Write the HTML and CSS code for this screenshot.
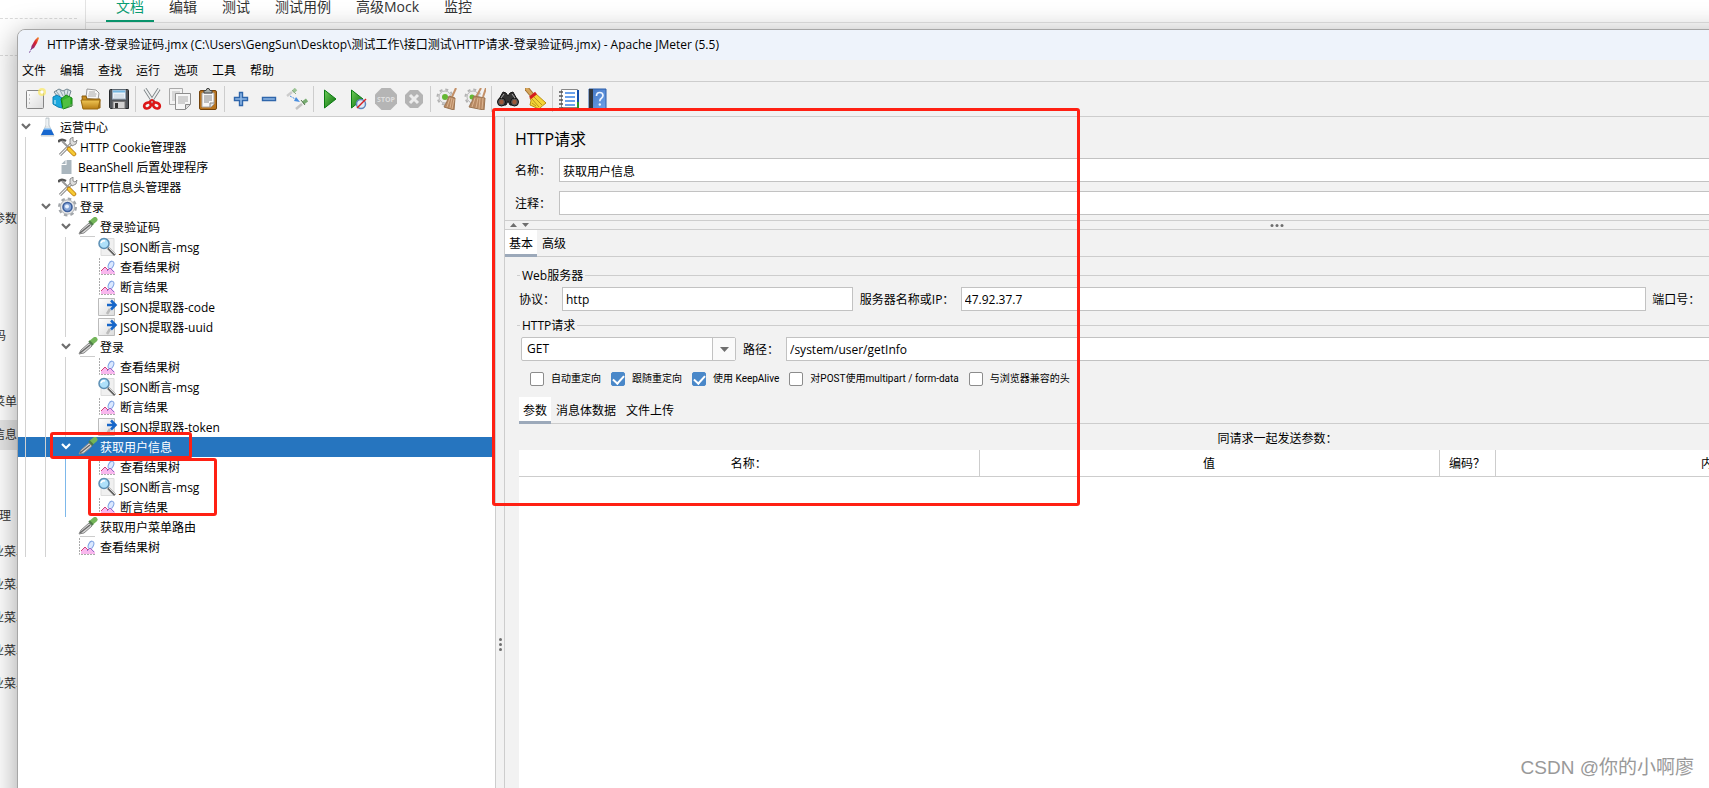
FILE: index.html
```html
<!DOCTYPE html>
<html lang="zh-CN">
<head>
<meta charset="utf-8">
<title>Apache JMeter (5.5)</title>
<link rel="stylesheet" href="styles.css">
</head>
<body>
<svg class="sprite" aria-hidden="true">
  <defs>
    <linearGradient id="g-paper" x1="0" y1="0" x2="1" y2="1"><stop offset="0" stop-color="#fff"/><stop offset="1" stop-color="#dcdcdc"/></linearGradient>
    <linearGradient id="g-green" x1="0" y1="0" x2="1" y2="1"><stop offset="0" stop-color="#6fce5a"/><stop offset="1" stop-color="#066b08"/></linearGradient>
    <linearGradient id="g-gold" x1="0" y1="0" x2="0" y2="1"><stop offset="0" stop-color="#f0c755"/><stop offset="1" stop-color="#b87d14"/></linearGradient>
    <linearGradient id="g-blue" x1="0" y1="0" x2="1" y2="1"><stop offset="0" stop-color="#3f73c4"/><stop offset="1" stop-color="#6fa3e8"/></linearGradient>
    <linearGradient id="g-feather" x1="1" y1="0" x2="0" y2="1"><stop offset="0" stop-color="#f59a2e"/><stop offset=".45" stop-color="#d9232e"/><stop offset="1" stop-color="#7b2a8c"/></linearGradient>
  </defs>

  <symbol id="i-feather" viewBox="0 0 14 18"><path d="M11 1 8 4 4.500 10 4 13.500 7 12l3-5 2-5z" fill="url(#g-feather)"/><path d="M4.500 12.500 2.500 16.500" stroke="#6b2a86" stroke-dasharray="2 1"/></symbol>

  <symbol id="i-new" viewBox="0 0 22 22"><rect x="2.500" y="2.500" width="17" height="18" rx="1" fill="url(#g-paper)" stroke="#858585"/><path d="M5 7h1M5 11h1M5 15h1" stroke="#999"/><circle cx="18" cy="4" r="4" fill="#fbe96a" opacity=".75"/><circle cx="18" cy="4" r="1.700" fill="#fff"/></symbol>

  <symbol id="i-templates" viewBox="0 0 22 22"><path d="M2 4 7 1l4 2 4-2 4 2-2 6-8 4z" fill="#dce6ea" stroke="#70858f"/><path d="M4 3 8 8M8 2l3 6M12 2l1 5M16 2l-1 5" stroke="#8ba0aa"/><path d="m1 9 4-2 5 3v10l-4-1-5-3z" fill="#1aa7dd" stroke="#0c7eb2"/><path d="M3 12v4" stroke="#d4f2ff"/><path d="m9 11 5-4 6 3v8l-9 3z" fill="#35b32b" stroke="#13820f"/><path d="m11 12 7-3v8l-7 4z" fill="#4fc040"/><path d="m19 16 3 1-8 4z" fill="#999" opacity=".5"/></symbol>

  <symbol id="i-open" viewBox="0 0 22 22"><path d="m6 10 1-9 9 1 3 3-1 7z" fill="#f7f7f7" stroke="#999"/><path d="M9 4h6M8.500 6h8M8 8h8" stroke="#aaa"/><path d="M2 8h4l1 3h13v9H3z" fill="#c78b1c" stroke="#8a5d0c"/><path d="M1 12h19l-2 9H3z" fill="url(#g-gold)" stroke="#9b6a10"/></symbol>

  <symbol id="i-save" viewBox="0 0 22 22"><path d="M1.500 2.500q0-1 1-1h17q1 0 1 1v18h-18l-1-1z" fill="#53575c" stroke="#25282b"/><rect x="4.500" y="2" width="13" height="9" fill="#e9f1f8" stroke="#9ab"/><path d="M5 3.500h12" stroke="#74b8e2" stroke-width="2"/><path d="M6 7h10M6 9h10" stroke="#c4d2dd"/><rect x="5" y="13.500" width="12" height="7" fill="#d2d2d2" stroke="#777"/><rect x="7" y="15" width="3" height="5" fill="#333"/></symbol>

  <symbol id="i-cut" viewBox="0 0 22 22"><path d="m4 1 9 14M18 1 9 15" stroke="#7d8386" stroke-width="3.500"/><path d="m4 1 9 14M18 1 9 15" stroke="#edf0f0" stroke-width="1.800"/><ellipse cx="6.500" cy="17.500" rx="3.500" ry="2.700" transform="rotate(-30 6.500 17.500)" fill="none" stroke="#dc1717" stroke-width="2.700"/><ellipse cx="15.500" cy="17.500" rx="3.500" ry="2.700" transform="rotate(30 15.500 17.500)" fill="none" stroke="#dc1717" stroke-width="2.700"/><path d="m8 14 3-2 3 2" fill="none" stroke="#dc1717" stroke-width="2"/></symbol>

  <symbol id="i-copy" viewBox="0 0 22 22"><path d="M.5.5h13v16H.5z" fill="#f3f3f3" stroke="#aaa"/><path d="M3 4h8M3 6h8M3 8h3M3 10h3M3 12h3" stroke="#bbb"/><path d="M6.500 5.500h15v11l-5 5h-10z" fill="#f7f7f7" stroke="#8d8d8d"/><path d="M9 9h10M9 11h10M9 13h10M9 15h7" stroke="#aaa"/><path d="M16.500 21v-4.500H21" fill="#ddd" stroke="#888"/></symbol>

  <symbol id="i-paste" viewBox="0 0 22 22"><rect x="2.500" y="2.500" width="17" height="19" rx="1.500" fill="#b87420" stroke="#73430c"/><path d="M5 5h12v11l-3 3H5z" fill="#f8f8f8" stroke="#aaa"/><path d="M7 8h8M7 10h8M7 12h8M7 14h5" stroke="#888"/><path d="M13 19v-4h4" fill="#ddd" stroke="#888"/><path d="M7 5V2.500h2L10 .500h2l1 2h2V5z" fill="#aab0ac" stroke="#444"/></symbol>

  <symbol id="i-plus" viewBox="0 0 22 22"><path d="M9.500 4.500h3v5h5v3h-5v5h-3v-5h-5v-3h5z" fill="#8fb8e6" stroke="#2f66ab" stroke-width="1.400"/></symbol>
  <symbol id="i-minus" viewBox="0 0 22 22"><path d="M4.500 9.500h13v3h-13z" fill="#8fb8e6" stroke="#2f66ab" stroke-width="1.400"/></symbol>

  <symbol id="i-toggle" viewBox="0 0 22 22"><path d="m1 8 5-4" stroke="#ccc" stroke-width="2.500"/><path d="m7 4 3-3" stroke="#9cc495" stroke-width="3.500"/><path d="m6 2 4 4" stroke="#8aab85"/><path d="m10 21 6-5" stroke="#c4c4c4" stroke-width="2.500"/><path d="m17 15 4-3" stroke="#77ab70" stroke-width="3.500"/><path d="m15 12 4 5" stroke="#55784f"/><path d="m4 8 7 4" stroke="#478de0" stroke-dasharray="2 1"/><path d="m10 9 4 5-6-1z" fill="#478de0"/></symbol>

  <symbol id="i-start" viewBox="0 0 22 22"><path d="m5.500 2 11.500 9-11.500 9z" fill="url(#g-green)" stroke="#0a7b11"/></symbol>
  <symbol id="i-start-np" viewBox="0 0 22 22"><path d="m4.500 2 11.500 9-11.500 9z" fill="url(#g-green)" stroke="#0a7b11"/><circle cx="14" cy="16" r="4.500" fill="#e1eaf6" stroke="#5f87bc" stroke-width="1.500"/><path d="m10 20 9-9" stroke="#d62323" stroke-width="1.500"/></symbol>
  <symbol id="i-stop" viewBox="0 0 22 22"><path d="M6.500 0h9L22 6.500v9L15.500 22h-9L0 15.500v-9z" fill="#b5b5b5"/><text x="11" y="14" text-anchor="middle" class="stop-word">STOP</text></symbol>
  <symbol id="i-shutdown" viewBox="0 0 22 22"><path d="M7 2h8l5 5v8l-5 5H7l-5-5V7z" fill="#b4b4b4"/><path d="m7 7 8 8M15 7l-8 8" stroke="#ececec" stroke-width="3"/></symbol>

  <symbol id="i-gear-s" viewBox="0 0 22 22"><circle cx="9" cy="9" r="7.500" fill="none" stroke="#b3b3b3" stroke-width="2" stroke-dasharray="3 2.900"/><circle cx="9" cy="9" r="6" fill="#eee" stroke="#b5b5b5"/></symbol>
  <symbol id="i-clear" viewBox="0 0 22 22"><use href="#i-gear-s"/><circle cx="9" cy="9" r="3" fill="#65b733"/><path d="m20 0-4 9" stroke="#c49067" stroke-width="2"/><path d="m13 8 6 2-1 12-10-3q3-5 5-11z" fill="#b78963" stroke="#9c7551"/><path d="m14 10-3 9M16 10l-2 10M18 11l-2 10" stroke="#dbb48f"/></symbol>
  <symbol id="i-clear-all" viewBox="0 0 22 22"><use href="#i-gear-s"/><circle cx="8" cy="9" r="2.500" fill="#65b733"/><path d="m17 0-5 9M22 0l-3 9" stroke="#c49067" stroke-width="2"/><path d="m10 8 11 2-1 12-15-3q3-5 5-11z" fill="#b78963" stroke="#9c7551"/><path d="m11 10-3 9M14 10l-2 10M16 10l-1 11M19 10l-1 11" stroke="#dbb48f"/></symbol>

  <symbol id="i-search" viewBox="0 0 22 22"><path d="m6 4 3 1 2 3 2-3 3-1 5 9-2 4h-6l-2-4-2 4H3l-2-4z" fill="#333" stroke="#151515"/><circle cx="4.500" cy="14" r="4" fill="#555" stroke="#111"/><circle cx="17.500" cy="14" r="4" fill="#555" stroke="#111"/><circle cx="4.500" cy="14" r="2.200" fill="#9d5939"/><circle cx="17.500" cy="14" r="2.200" fill="#9d5939"/><path d="m7 6-3 4M15 6l3 4" stroke="#aaa"/></symbol>
  <symbol id="i-broom" viewBox="0 0 22 22"><path d="m2 1 5 6" stroke="#a47432" stroke-width="5" stroke-linecap="round"/><path d="m2 1 5 6" stroke="#d6a55b" stroke-width="3" stroke-linecap="round"/><path d="m10 5 11 10q-4 3-7 6L5 17q2-5 0-7z" fill="#f4d536" stroke="#b98e14"/><path d="m9 9 8 8M7 11l7 8M7 15l4 3" stroke="#b9941d"/><path d="m5 10 6-5" stroke="#d51d1d" stroke-width="3"/></symbol>
  <symbol id="i-log" viewBox="0 0 22 22"><path d="M3.500 1.500h16v18h-16z" fill="#fff" stroke="#888"/><path d="M19 2h2v19h-2z" fill="#124eac"/><path d="M19 14h2v7h-2z" fill="#27922e"/><path d="M7 5h10M7 9h10M7 13h10M7 17h10" stroke="#3a82e5" stroke-width="1.500"/><path d="M1 4h4M1 8h4M1 12h4M1 16h4M1 20h4" stroke="#555" stroke-width="1.500"/></symbol>
  <symbol id="i-help" viewBox="0 0 22 22"><path d="M3 1h17v20H3z" fill="url(#g-blue)" stroke="#2d5ea8"/><path d="M3 1h4v20H3z" fill="#31363d"/><path d="M10.500 8q0-3.500 3.200-3.500 3.300 0 3.300 3 0 1.500-1.600 2.700-1.600 1-1.600 3" fill="none" stroke="#eaf3ff" stroke-width="1.700"/><circle cx="13.800" cy="16.500" r="1.200" fill="#eaf3ff"/></symbol>

  <symbol id="i-chevron" viewBox="0 0 11 20"><path d="m1 7 4 4 4-4" fill="none" stroke="currentColor" stroke-width="2.200"/></symbol>
  <symbol id="i-flask" viewBox="0 0 20 20"><path d="M8 1h3v7l5 11H3L8 8z" fill="#dfe6ea" stroke="#b7c0c5" stroke-width=".8"/><path d="M6 12h7l3 6H3z" fill="#1767cf"/><path d="M6 12h7" stroke="#8cc3f5" stroke-width="1.500"/><path d="M9 2v7" stroke="#fff"/></symbol>
  <symbol id="i-tools" viewBox="0 0 20 20"><path d="m2 18 12-12" stroke="#777" stroke-width="3"/><path d="m2 18 12-12" stroke="#eee" stroke-width="1.300"/><path d="M12 6V2l3-2v4l2 1 2-2-1 4-4 2z" fill="#ddd" stroke="#777" stroke-width=".8"/><path d="M0 5q3-4 8-1" fill="none" stroke="#555" stroke-width="2.500"/><path d="m4 4 7 7" stroke="#999" stroke-width="2"/><path d="m11 12 5 5" stroke="#b8780a" stroke-width="4.500" stroke-linecap="round"/><path d="m11 12 5 5" stroke="#f6ca35" stroke-width="3" stroke-linecap="round"/></symbol>
  <symbol id="i-doc" viewBox="0 0 17 20"><path d="M8 3h5v14H3V8h5z" fill="#aab6be"/><path d="M7 3v4H3z" fill="#aab6be"/></symbol>
  <symbol id="i-gear" viewBox="0 0 20 20"><circle cx="9.500" cy="10" r="8.300" fill="none" stroke="#a2a6aa" stroke-width="2.400" stroke-dasharray="3.500 3.018"/><circle cx="9.500" cy="10" r="7.200" fill="#e6e6e6" stroke="#b0b4b8"/><circle cx="9.500" cy="10" r="4.500" fill="#86a5d8" stroke="#3d609d" stroke-width="1.600"/><circle cx="9" cy="9.500" r="2" fill="#e7f0fd"/></symbol>
  <symbol id="i-dropper" viewBox="0 0 20 20"><path d="M2 19.500h15" stroke="#ccc"/><path d="m1 17 2-4 8-7 3 3-8 7z" fill="#d8d8d8" stroke="#888"/><path d="m2 16 10-8" stroke="#666" stroke-width="1.500"/><path d="m14 5 3-2.500" stroke="#74b65a" stroke-width="5" stroke-linecap="round"/><path d="m11 4 4 4" stroke="#4e7b48" stroke-width="2"/></symbol>
  <symbol id="i-lens" viewBox="0 0 20 20"><path d="M3 1.500h13v17H3z" fill="#f0f0f0" stroke="#dcdcdc"/><path d="m10 11 7 7" stroke="#666" stroke-width="2.500"/><path d="m11 11 6 6" stroke="#ddd"/><circle cx="6" cy="6.500" r="5" fill="#aee0fa" stroke="#5d8fb4" stroke-width="1.500"/><path d="M3 6q1-3 4-2" fill="none" stroke="#fff" stroke-width="1.500"/></symbol>
  <symbol id="i-chart" viewBox="0 0 20 20"><path d="M1.500 1v16.500H17" fill="none" stroke="#aaa" stroke-dasharray="2 1"/><ellipse cx="13" cy="8" rx="2.500" ry="4" transform="rotate(25 13 8)" fill="#dbe8ff" stroke="#7fa4e4"/><path d="m3 14 4-4 3 3 3-2 4 4v2H3z" fill="#f9b8ee"/><path d="m3 14 4-4 3 3" fill="none" stroke="#d04477"/><path d="m9 14 3-3 4 4" fill="none" stroke="#9271c9"/></symbol>
  <symbol id="i-extract" viewBox="0 0 20 20"><path d="M.500 1.500h16v17H.500z" fill="url(#g-paper)" stroke="#bbb"/><path d="m9 17 3-5" stroke="#bbb" stroke-width="2.500"/><path d="M9 8h8M13 3.500 17.500 8 13 12.500" fill="none" stroke="#1666c9" stroke-width="2.500"/></symbol>
</svg>

<div class="screen">
  <div class="docs">
    <aside class="docs-side">
      <div class="dash"></div>
      <div class="dash dash-second"></div>
      <div class="side-item item-params">参数</div>
      <div class="side-item item-code">码</div>
      <div class="side-item item-menu">菜单</div>
      <div class="side-item item-info">信息</div>
      <div class="side-item item-manage">理</div>
      <div class="side-item item-sub">业菜单</div>
      <div class="side-item item-sub">业菜单</div>
      <div class="side-item item-sub">业菜单</div>
      <div class="side-item item-sub">业菜单</div>
      <div class="side-item item-sub">业菜单</div>
    </aside>
    <nav class="docs-tabs">
      <a href="#" class="docs-tab active">文档</a>
      <a href="#" class="docs-tab">编辑</a>
      <a href="#" class="docs-tab">测试</a>
      <a href="#" class="docs-tab">测试用例</a>
      <a href="#" class="docs-tab">高级Mock</a>
      <a href="#" class="docs-tab">监控</a>
    </nav>
  </div>

  <main class="window">
    <header class="titlebar"><svg class="app-icon"><use href="#i-feather"/></svg><span>HTTP请求-登录验证码.jmx (C:\Users\GengSun\Desktop\测试工作\接口测试\HTTP请求-登录验证码.jmx) - Apache JMeter (5.5)</span></header>
    <nav class="menubar">
      <button>文件</button><button>编辑</button><button>查找</button><button>运行</button><button>选项</button><button>工具</button><button>帮助</button>
    </nav>
    <div class="toolbar">
      <button aria-label="新建"><svg><use href="#i-new"/></svg></button>
      <button aria-label="模板"><svg><use href="#i-templates"/></svg></button>
      <button aria-label="打开"><svg><use href="#i-open"/></svg></button>
      <button aria-label="保存"><svg><use href="#i-save"/></svg></button>
      <i class="sep"></i>
      <button aria-label="剪切"><svg><use href="#i-cut"/></svg></button>
      <button aria-label="复制"><svg><use href="#i-copy"/></svg></button>
      <button aria-label="粘贴"><svg><use href="#i-paste"/></svg></button>
      <i class="sep"></i>
      <button aria-label="展开"><svg><use href="#i-plus"/></svg></button>
      <button aria-label="折叠"><svg><use href="#i-minus"/></svg></button>
      <button aria-label="切换"><svg><use href="#i-toggle"/></svg></button>
      <i class="sep"></i>
      <button aria-label="启动"><svg><use href="#i-start"/></svg></button>
      <button aria-label="不停顿启动"><svg><use href="#i-start-np"/></svg></button>
      <button aria-label="停止" disabled><svg><use href="#i-stop"/></svg></button>
      <button aria-label="关闭" disabled><svg><use href="#i-shutdown"/></svg></button>
      <i class="sep"></i>
      <button aria-label="清除"><svg><use href="#i-clear"/></svg></button>
      <button aria-label="清除全部"><svg><use href="#i-clear-all"/></svg></button>
      <i class="sep"></i>
      <button aria-label="搜索"><svg><use href="#i-search"/></svg></button>
      <button aria-label="重置搜索"><svg><use href="#i-broom"/></svg></button>
      <i class="sep"></i>
      <button aria-label="函数助手"><svg><use href="#i-log"/></svg></button>
      <button aria-label="帮助"><svg><use href="#i-help"/></svg></button>
    </div>

    <div class="workspace">
      <div class="tree-pane">
        <ul class="tree">
          <li>
            <div class="node root"><svg class="chev"><use href="#i-chevron"/></svg><svg class="ico"><use href="#i-flask"/></svg><span>运营中心</span></div>
            <ul class="branch first">
              <li><div class="node leaf"><svg class="ico"><use href="#i-tools"/></svg><span>HTTP Cookie管理器</span></div></li>
              <li><div class="node leaf"><svg class="ico narrow"><use href="#i-doc"/></svg><span>BeanShell 后置处理程序</span></div></li>
              <li><div class="node leaf"><svg class="ico"><use href="#i-tools"/></svg><span>HTTP信息头管理器</span></div></li>
              <li>
                <div class="node"><svg class="chev"><use href="#i-chevron"/></svg><svg class="ico"><use href="#i-gear"/></svg><span>登录</span></div>
                <ul class="branch">
                  <li>
                    <div class="node"><svg class="chev"><use href="#i-chevron"/></svg><svg class="ico"><use href="#i-dropper"/></svg><span>登录验证码</span></div>
                    <ul class="branch">
                      <li><div class="node leaf"><svg class="ico"><use href="#i-lens"/></svg><span>JSON断言-msg</span></div></li>
                      <li><div class="node leaf"><svg class="ico"><use href="#i-chart"/></svg><span>查看结果树</span></div></li>
                      <li><div class="node leaf"><svg class="ico"><use href="#i-chart"/></svg><span>断言结果</span></div></li>
                      <li><div class="node leaf"><svg class="ico"><use href="#i-extract"/></svg><span>JSON提取器-code</span></div></li>
                      <li><div class="node leaf"><svg class="ico"><use href="#i-extract"/></svg><span>JSON提取器-uuid</span></div></li>
                    </ul>
                  </li>
                  <li>
                    <div class="node"><svg class="chev"><use href="#i-chevron"/></svg><svg class="ico"><use href="#i-dropper"/></svg><span>登录</span></div>
                    <ul class="branch">
                      <li><div class="node leaf"><svg class="ico"><use href="#i-chart"/></svg><span>查看结果树</span></div></li>
                      <li><div class="node leaf"><svg class="ico"><use href="#i-lens"/></svg><span>JSON断言-msg</span></div></li>
                      <li><div class="node leaf"><svg class="ico"><use href="#i-chart"/></svg><span>断言结果</span></div></li>
                      <li><div class="node leaf"><svg class="ico"><use href="#i-extract"/></svg><span>JSON提取器-token</span></div></li>
                    </ul>
                  </li>
                  <li>
                    <div class="node selected"><svg class="chev"><use href="#i-chevron"/></svg><svg class="ico"><use href="#i-dropper"/></svg><span>获取用户信息</span></div>
                    <ul class="branch current">
                      <li><div class="node leaf"><svg class="ico"><use href="#i-chart"/></svg><span>查看结果树</span></div></li>
                      <li><div class="node leaf"><svg class="ico"><use href="#i-lens"/></svg><span>JSON断言-msg</span></div></li>
                      <li><div class="node leaf"><svg class="ico"><use href="#i-chart"/></svg><span>断言结果</span></div></li>
                    </ul>
                  </li>
                  <li><div class="node leaf"><svg class="ico"><use href="#i-dropper"/></svg><span>获取用户菜单路由</span></div></li>
                  <li><div class="node leaf"><svg class="ico"><use href="#i-chart"/></svg><span>查看结果树</span></div></li>
                </ul>
              </li>
            </ul>
          </li>
        </ul>
      </div>
      <div class="splitter"><i></i><i></i><i></i></div>

      <section class="editor">
        <div class="head">
          <h1>HTTP请求</h1>
          <div class="row"><label class="head-label" for="name">名称：</label><input id="name" class="field" type="text" value="获取用户信息"></div>
          <div class="row"><label class="head-label" for="comment">注释：</label><input id="comment" class="field" type="text"></div>
        </div>
        <div class="hsplit">
          <svg class="arrows" viewBox="0 0 20 8"><path d="M0 6h7L3.500 2zM12 2h7l-3.500 4z" fill="#6e6e6e"/></svg>
          <span class="dots"><i></i><i></i><i></i></span>
        </div>
        <div class="tabs"><button class="tab active">基本</button><button class="tab">高级</button></div>
        <div class="body">
          <fieldset class="group">
            <legend>Web服务器</legend>
            <div class="row">
              <label class="protocol-label" for="protocol">协议：</label><input id="protocol" class="field protocol" type="text" value="http">
              <label class="server-label" for="server">服务器名称或IP：</label><input id="server" class="field server" type="text" value="47.92.37.7">
              <label class="port-label" for="port">端口号：</label><input id="port" class="field port" type="text">
            </div>
          </fieldset>
          <fieldset class="group">
            <legend>HTTP请求</legend>
            <div class="row request-row">
              <span class="combo"><select aria-label="方法"><option>GET</option></select><svg viewBox="0 0 22 22"><path d="M7 9h9l-4.500 5z" fill="#6e6e6e"/></svg></span>
              <label class="path-label" for="path">路径：</label><input id="path" class="field" type="text" value="/system/user/getInfo">
            </div>
            <div class="checks">
              <label><input type="checkbox">自动重定向</label>
              <label><input type="checkbox" checked>跟随重定向</label>
              <label><input type="checkbox" checked>使用 KeepAlive</label>
              <label><input type="checkbox">对POST使用multipart / form-data</label>
              <label><input type="checkbox">与浏览器兼容的头</label>
            </div>
          </fieldset>
          <div class="params">
            <div class="tabs"><button class="tab active">参数</button><button class="tab">消息体数据</button><button class="tab">文件上传</button></div>
            <table class="grid">
              <caption>同请求一起发送参数：</caption>
              <thead><tr><th>名称：</th><th>值</th><th class="col-encode">编码？</th><th>内容类型</th><th class="col-equals"></th></tr></thead>
            </table>
            <div class="grid-fill"></div>
          </div>
        </div>
      </section>
    </div>
  </main>

  <div class="mark mark-editor"></div>
  <div class="mark mark-node"></div>
  <div class="mark mark-children"></div>
  <div class="watermark">CSDN @你的小啊廖</div>
</div>
</body>
</html>
```

FILE: styles.css
```css
* { box-sizing: border-box; }

body {
  margin: 0;
  background: #fff;
  color: #000;
  font: 12px/20px "Open Sans", "Noto Sans CJK SC", sans-serif;
}

button, input, select { font: inherit; color: inherit; }
button { border: 0; padding: 0; background: none; }
ul { list-style: none; margin: 0; padding: 0; }
.sprite { position: absolute; width: 0; height: 0; }
.stop-word { font: 700 7px "Open Sans", sans-serif; fill: #dedede; }

.screen { position: relative; height: 100vh; overflow: hidden; }

/* Page behind the window */
.docs { display: flex; height: 100%; }

.docs-side {
  flex: 0 0 86px;
  min-width: 0;
  border-right: 1px solid #e4e4e4;
  color: #333;
}
.dash { height: 19px; width: 77px; border-bottom: 1px dashed #dcdcdc; }
.dash-second { height: 37px; }
.side-item {
  display: flex;
  justify-content: flex-end;
  align-items: center;
  height: 30px;
  white-space: nowrap;
  padding-right: 68px;
}
.item-params { margin-top: 148px; }
.item-code { margin-top: 87px; padding-right: 79px; }
.item-menu { margin-top: 36px; }
.item-info { margin-top: 3px; background: #e6e6e6; }
.item-manage { margin-top: 51px; padding-right: 74px; }
.item-sub { height: 33px; padding-right: 57px; }
.item-manage + .item-sub { margin-top: 4px; }

.docs-tabs {
  flex: 1;
  display: flex;
  gap: 5px;
  height: 23px;
  padding-left: 20px;
  border-bottom: 1px solid #e4e4e4;
}
.docs-tab {
  height: 22px;
  padding: 0 10px;
  color: #333;
  font-size: 14px;
  line-height: 14px;
  text-decoration: none;
}
.docs-tab.active { color: #0a9e73; border-bottom: 2px solid #0a9e73; }

/* The window runs past the right and bottom screen edges */
.window {
  position: absolute;
  top: 29px;
  left: 17px;
  right: -340px;
  bottom: -385px;
  display: flex;
  flex-direction: column;
  overflow: hidden;
  border: 1px solid #a6a6a6;
  border-radius: 8px 8px 0 0;
  background: #f2f2f2;
  box-shadow: 0 6px 30px rgba(0, 0, 0, .38);
}

.titlebar {
  display: flex;
  align-items: center;
  gap: 6px;
  height: 30px;
  padding-left: 9px;
  background: #eef3fb;
  white-space: nowrap;
}
.app-icon { width: 14px; height: 18px; }

.menubar {
  display: flex;
  align-items: flex-end;
  gap: 14px;
  height: 22px;
  padding-left: 4px;
  border-bottom: 1px solid #cdcdcd;
}

.toolbar {
  display: flex;
  align-items: center;
  height: 35px;
  padding-left: 3px;
  border-bottom: 1px solid #cdcdcd;
}
.toolbar button { display: grid; place-items: center; width: 28px; height: 28px; }
.toolbar svg { width: 22px; height: 22px; }
.sep { display: grid; justify-content: center; width: 5px; }
.sep::before { content: ""; width: 1px; height: 26px; background: #cdcdcd; }

.workspace { flex: 1; display: flex; min-height: 0; }

/* Test plan tree */
.tree-pane { flex: 0 0 477px; background: #fff; isolation: isolate; overflow: hidden; }
.branch { margin-left: 19px; border-left: 1px solid #d2d2d2; }
.branch.first { margin-left: 7px; }
.branch.current { border-color: #7db8ea; }
.node {
  display: flex;
  align-items: center;
  height: 20px;
  padding-left: 15px;
  white-space: nowrap;
}
.node span { padding-top: 2px; }
.node.leaf { padding-left: 32px; }
.node.root { padding-left: 3px; }
.chev { width: 11px; height: 20px; margin-right: 6px; color: #6e6e6e; }
.ico { width: 20px; height: 20px; margin-right: 2px; }
.ico.narrow { width: 18px; }
.node.selected { position: relative; color: #fff; }
.node.selected .chev { color: #fff; }
.node.selected::before {
  content: "";
  position: absolute;
  z-index: -1;
  inset: 0 0 0 -30px;
  background: #2675bf;
}

.splitter {
  flex: 0 0 10px;
  display: flex;
  flex-direction: column;
  align-items: center;
  justify-content: center;
  gap: 2px;
  border: solid #cdcdcd;
  border-width: 0 1px;
}
.splitter i, .dots i { width: 3px; height: 3px; border-radius: 50%; background: #6e6e6e; }

/* Sampler editor */
.editor { flex: 1; min-width: 0; display: flex; flex-direction: column; }
.head { padding: 10px 0 5px 10px; }
.head .row { margin-bottom: 9px; }
.head .row:last-child { margin-bottom: 0; }
h1 { margin: 0 0 7px; font-size: 16px; font-weight: 400; line-height: 24px; }
.row { display: flex; align-items: center; }
.row label { padding-top: 2px; }
.row .head-label { flex: 0 0 44px; }
.field {
  flex: 1;
  min-width: 0;
  height: 24px;
  padding: 1px 3px 0;
  border: 1px solid #c2c2c2;
  border-radius: 0;
  background: #fff;
}

.hsplit {
  display: flex;
  align-items: center;
  position: relative;
  height: 10px;
  border: solid #cdcdcd;
  border-width: 1px 0;
}
.arrows { width: 20px; height: 8px; margin-left: 5px; }
.dots { position: absolute; left: 50%; transform: translateX(-50%); display: flex; gap: 2px; }

.tabs { display: flex; height: 27px; border-bottom: 1px solid #cdcdcd; }
.tab { height: 27px; padding: 4px 5px 0; border-bottom: 3px solid transparent; line-height: 20px; white-space: nowrap; }
.tab.active { padding: 4px 4px 0; background: #fff; border-bottom-color: #9ca9ba; }

.body { flex: 1; display: flex; flex-direction: column; padding: 9px 12px 0; }
.group { min-width: 0; margin: 0 0 5px; padding: 3px 0 0 2px; border: 0; border-top: 1px solid #cdcdcd; }
legend { margin-left: 1px; padding: 1px 2px 0; line-height: 17px; }
.protocol-label { flex: 0 0 43px; }
.protocol { flex: 283 1 0; }
.server { flex: 678 1 0; }
.port { flex: 318 1 0; }
.server-label { flex: 0 0 108px; padding-left: 7px; }
.port-label { flex: 0 0 64px; padding-left: 6px; }

.request-row { padding-left: 2px; }
.combo {
  display: flex;
  flex: 0 0 215px;
  height: 24px;
  border: 1px solid #c2c2c2;
  border-radius: 2px;
  background: #fff;
}
.combo select { flex: 1; appearance: none; border: 0; padding: 0 5px; background: none; }
.combo svg { width: 23px; height: 22px; border-left: 1px solid #c2c2c2; background: #fafafa; }
.path-label { flex: 0 0 50px; padding-left: 7px; }

.checks {
  display: flex;
  gap: 10px;
  padding: 11px 0 6px 11px;
  font: 10px/14px Roboto, "Noto Sans CJK SC", sans-serif;
}
.checks label { display: flex; align-items: center; gap: 7px; white-space: nowrap; }
.checks input {
  appearance: none;
  width: 14px;
  height: 14px;
  margin: 0;
  border: 1px solid #8c8c8c;
  border-radius: 2px;
  background: #fff;
  display: grid;
  place-items: center;
}
.checks input:checked { background: #4a88c9; border-color: #4a88c9; }
.checks input:checked::before {
  content: "";
  width: 5px;
  height: 9px;
  margin-bottom: 2px;
  border: solid #fff;
  border-width: 0 2px 2px 0;
  transform: rotate(42deg);
}

.params { flex: 1; display: flex; flex-direction: column; margin-left: 2px; }
.grid { width: 100%; table-layout: fixed; border-collapse: collapse; }
caption { height: 26px; padding-top: 5px; line-height: 20px; }
th {
  height: 26px;
  padding: 2px 0 0;
  border-bottom: 1px solid #cdcdcd;
  border-left: 1px solid #cdcdcd;
  background: #fff;
  font-weight: 400;
}
th:first-child { border-left: 0; }
.col-encode { width: 56px; }
.col-equals { width: 81px; }
.grid-fill { flex: 1; background: #fff; }

/* Highlight rectangles laid over the window */
.mark { position: absolute; border: 3px solid #ff2013; border-radius: 3px; pointer-events: none; }
.mark-editor { left: 492px; top: 108px; width: 588px; height: 398px; }
.mark-node { left: 50px; top: 432px; width: 142px; height: 27px; }
.mark-children { left: 88px; top: 458px; width: 129px; height: 58px; }

.watermark {
  position: absolute;
  right: 15px;
  bottom: 8px;
  color: #999;
  font: 19px/24px "Liberation Sans", "Noto Sans CJK SC", sans-serif;
}
```
